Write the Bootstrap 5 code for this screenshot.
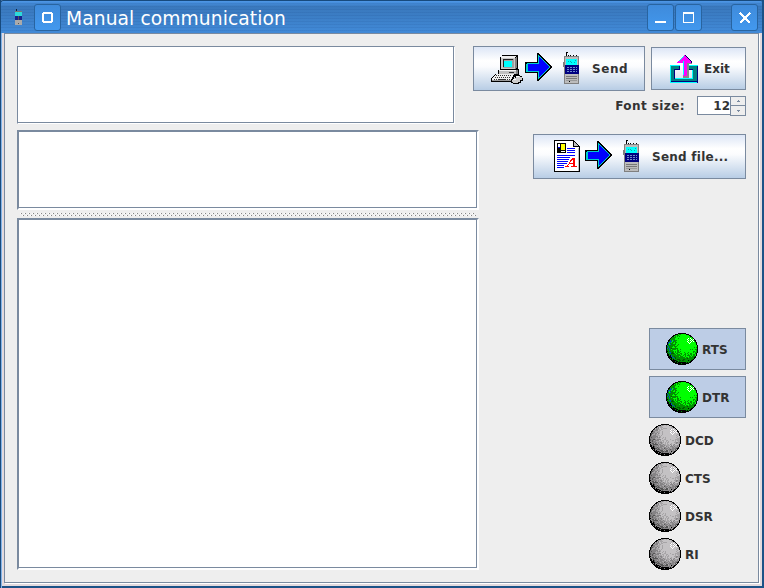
<!DOCTYPE html>
<html lang="en">
<head>
<meta charset="utf-8">
<title>Manual communication</title>
<link rel="stylesheet" href="https://cdn.jsdelivr.net/npm/bootstrap@5.3.0/dist/css/bootstrap.min.css">
<style>
:root{--slate:#7a8a9f;--ink:#333}
body{font:bold 12px/16px "DejaVu Sans",sans-serif;color:var(--ink);background:#eee}
svg{display:block;flex:none;shape-rendering:crispEdges}
.app-window{width:764px;height:588px;background:#e3dade;box-shadow:inset 1px 0 #1c4b7c,inset 2px 0 #80b3e8,inset -2px -2px #1c5287;overflow:hidden}
.titlebar{height:33px;flex:none;padding:1px 6px 0 14px;color:#fff;border-top:1px solid #174a7d;border-left:1px solid #174a7d;border-right:2px solid #1c5287;border-radius:3px 3px 0 0;
 background:repeating-linear-gradient(transparent 0 2px,rgba(0,30,90,.07) 2px 3px),linear-gradient(#4f98e8 0,#458cd9 2px,#3a79bd 6px,#3b7dc4 14px,#4189d6 30px)}
.title-text{font:18.7px/24px "DejaVu Sans",sans-serif;white-space:nowrap;padding:2px 0 0 5px;letter-spacing:.08px}
.tbtn{width:27px;height:27px;padding:0;border:1px solid #2864a0;border-radius:3px;background:linear-gradient(#3f8bdb,#4298ee);display:flex}
.tb-menu{margin-left:11px}
.tb-max{margin-left:1px}
.tb-close{margin-left:29px;margin-right:-2px}
.client{margin:0 5px 5px 4px;border:1px solid var(--slate);background:#eee;padding:12px 12px 0;box-shadow:1px 1px #fff;min-height:0}
.field-box{background:#fff;border:2px solid;border-color:var(--slate) #fff #fff var(--slate);box-shadow:inset -1px -1px var(--slate)}
.prompt-box{width:438px;height:78px;border-width:1px}
.upper{height:84px}
.left-pane{width:462px}
.mid-box{height:80px}
.log-box{height:352px}
.divider{margin:3px 0 1px 3px}
.ocean{font:inherit;color:inherit;padding:0;border:1px solid var(--slate);border-radius:0;background:linear-gradient(#dde6f6 0,#fff 32%,#fbfcfe 45%,#b8cde5 100%);outline:0;display:flex;align-items:center;white-space:nowrap}
.b-send{width:172px;height:45px;padding-left:17px;letter-spacing:.55px}
.b-exit{width:95px;height:43px;margin-top:1px;padding-left:18px}
.b-file{width:213px;height:45px;padding-left:17px;letter-spacing:.25px}
.cmd-row{gap:6px}
.send-label{margin-left:11px}
.exit-label{margin-left:6px}
.file-label{margin-left:8px}
.size-row{letter-spacing:.42px;height:20px;margin-top:5px}
.size-label{margin-right:12px}
.spin{width:49px;height:20px}
.spin-val{width:34px;height:19px;background:#fff;border:1px solid var(--slate);font:bold 12px/18px "DejaVu Sans",sans-serif;letter-spacing:0;text-align:right}
.spin-step{width:16px;height:10px;margin-left:-1px;border:1px solid var(--slate);background:#eee}
.spin-step+.spin-step{border-top:0}
.right-pane{padding-top:4px}
.leds{margin-top:149px;gap:6px}
.toggle span,.led-row span{padding-top:2px}
.led-row span{padding-top:1px}
.toggle{width:97px;height:42px;padding-left:16px;gap:4px;background:#bdcde6;border:1px solid var(--slate)}
.led-row{width:97px;height:32px;gap:4px}
</style>
<script src="https://cdn.jsdelivr.net/npm/bootstrap@5.3.0/dist/js/bootstrap.bundle.min.js"></script>
</head>
<body class="m-0">
<svg width="0" height="0" class="position-absolute">
<defs>
<pattern id="grip" width="4" height="4" patternUnits="userSpaceOnUse"><path fill="#fff" d="M0 0h1v1H0zM2 2h1v1H2z"/><path fill="#858585" d="M1 0h1v1H1zM3 2h1v1H3z"/></pattern>
<symbol id="arrow" viewBox="0 0 28 28">
 <path fill="#000" d="M12 0h2L27.500 14 14 28h-2v-8H0V9h12z"/>
 <path fill="#0cc" d="M13 1.500L25.500 14 13 26.500V19H1v-9h12z"/>
 <path fill="#00f" d="M14 3.500L25 14 14 24.500V18H2.500v-7H14z"/>
 <path fill="#000" d="M1 10h1v1H1z"/>
</symbol>
<symbol id="phone" viewBox="0 0 17 33">
 <path fill="#000" d="M3 1h1v3H3zM7 3h1v1H7zM10 3h1v1h-1zM13 3h1v1h-1zM5 3h1v1H5zM3 0h2v1H3z"/>
 <path fill="#808080" d="M1 4h15v28H1zM0 10h1v5H0z"/><path fill="#bcbcbc" d="M2 5h13v26H2z"/>
 <path fill="#0ff" d="M3 7h11v6H3z"/><path fill="#08a8b0" d="M5 9h1v1H5zM8 10h1v1H8zM12 8h1v1h-1zM11 10h1v1h-1zM7 9h1v1H7z"/>
 <path fill="#000080" d="M2 13h14v9H2z"/><path fill="#6f8ccc" d="M4 15h2v1H4zm3 0h2v1H7zm3 0h2v1h-2zm3 0h1v1h-1zM4 17h2v1H4zm3 0h2v1H7zm3 0h2v1h-2zm3 0h1v1h-1zM4 19h2v1H4zm3 0h2v1H7zm3 0h2v1h-2zm3 0h1v1h-1z"/>
 <path fill="#777" d="M3 24h11v1H3zM3 26h11v1H3z"/><path fill="#999" d="M3 28h11v1H3z"/><path d="M6 29h1v1H6z"/>
</symbol>
<symbol id="computer" viewBox="0 0 32 31">
 <path fill="#000" d="M11 0h16v14h1v6h-3v1h-1l-3 6H0v-3l4-5h3v-4h2V2h2z"/>
 <path fill="#c8c8c8" d="M10 3h14v11H10z"/><path fill="#eee" d="M11 1h14v1h-1v1H10V2h1z"/>
 <path fill="#808080" d="M24 3h1V2h1v11h-1v1h-1z"/><path fill="#a0a0a0" d="M12 4h11v9H12z"/><path fill="#222" d="M12 4h10v1H13v7h-1z"/>
 <path fill="#0ff" d="M13 6h8v6h-8z"/>
 <path fill="#f4f4f4" d="M8 15h17v1H8z"/><path fill="#c0c0c0" d="M8 16h17v3H8z"/><path fill="#808080" d="M25 15h2v4h-2z"/><path fill="#333" d="M18 17h5v1h-5z"/>
 <path fill="#eee" d="M5 19h18l-3 6H1v-1z"/>
 <path fill="#333" d="M5 20h1v1H5zm2 0h1v1H7zm2 0h1v1H9zm2 0h1v1h-1zm2 0h1v1h-1zm2 0h1v1h-1zm2 0h1v1h-1zm2 0h1v1h-1zM4 22h1v1H4zm2 0h1v1H6zm2 0h1v1H8zm2 0h1v1h-1zm2 0h1v1h-1zm2 0h1v1h-1zm2 0h1v1h-1zm2 0h1v1h-1zM3 24h1v1H3zm2 0h1v1H5zm2 0h8v1H7zm9 0h1v1h-1zm2 0h1v1h-1z"/>
 <path fill="#999" d="M1 25h20v1H1z"/><path fill="#000" d="M25 20h4v1h2v2h1v3h-2v2h-2v1h-6v-1h-2v-4h2v-1h2v-2h1z"/>
 <path fill="#ccc" d="M25 21h4v1h2v3h-2v2h-2v1h-5v-1h-1v-2h2v-2h2z"/><path fill="#fff" d="M25 21h3v1h-3zm-3 3h3v1h-3z"/>
</symbol>
<symbol id="document" viewBox="0 0 26 32">
 <path d="M0 0h20v1h1v1h1v1h1v1h1v1h1v1h1v26H0z"/><path fill="#fff" d="M1 1h18v6h6v24H1z"/><path fill="#c0c0c0" d="M20 2h1v1h1v1h1v1h1v1h-4zM24 8h1v23h-1z"/>
 <path d="M3 3h9v10H3z"/><path fill="#fff" d="M4 4h2v8H4z"/><path fill="#00f" d="M4 7h2v1H4z"/><path d="M4 8h2v4H4z"/><path fill="#ff0" d="M7 4h4v6H7z"/><path fill="#fff" d="M7 11h4v1H7z"/>
 <path fill="#00f" d="M13 8h8v1h-8zM13 10h8v1h-8zM13 12h8v1h-8zM3 15h18v1H3zM3 17h13v1H3zM3 19h12v1H3zM3 21h11v1H3zM3 23h10v1H3zM3 25h7v1H3zM3 27h7v1H3z"/>
 <path fill="#f00" d="M18 18h3v8h2v1h-6v-1h2v-2h-4l-1 2h1v1h-4v-1h2z"/><path fill="#fff" d="M16 23l3-4v4z"/>
</symbol>
</defs></svg>

<main class="app-window d-flex flex-column">
 <header class="titlebar d-flex align-items-center">
  <svg width="8" height="17" viewBox="0 0 8 17"><path fill="#123" d="M1 0h1v3H1z"/><path fill="#777" d="M0 2h7v14H0z"/><path fill="#2cdada" d="M0 3h7v4H0z"/><path fill="#18238c" d="M0 7h7v4H0z"/><path fill="#aaa" d="M0 11h7v5H0z"/><path fill="#555" d="M3 7h1v4H3zM3 14h1v1H3z"/></svg>
  <button class="tbtn align-items-center justify-content-center tb-menu" aria-label="Menu"><svg width="11" height="11" viewBox="0 0 11 11"><path fill="#fff" fill-rule="evenodd" d="M1 0h9v1h1v9h-1v1H1v-1H0V1h1zM2 2v7h7V2z"/></svg></button>
  <div class="title-text flex-grow-1">Manual communication</div>
  <button class="tbtn align-items-center justify-content-center" aria-label="Minimize"><svg width="11" height="11"><path fill="#fff" d="M0 9h11v2H0z"/></svg></button>
  <button class="tbtn align-items-center justify-content-center tb-max" aria-label="Maximize"><svg width="11" height="11"><path fill="#fff" fill-rule="evenodd" d="M0 0h11v11H0zM1 2v8h9V2z"/></svg></button>
  <button class="tbtn align-items-center justify-content-center tb-close" aria-label="Close"><svg width="12" height="12"><path fill="none" stroke="#fff" stroke-width="2.300" d="M1 1l10 10M11 1L1 11"/></svg></button>
 </header>
 <section class="client flex-grow-1">
  <div class="upper d-flex justify-content-between">
   <div class="field-box prompt-box"></div>
   <div class="d-flex flex-column align-items-end">
    <div class="d-flex cmd-row">
     <button class="ocean b-send"><svg width="90" height="33"><use href="#computer" y="3" width="32" height="31"/><use href="#arrow" x="34" y="1" width="28" height="28"/><use href="#phone" x="72" width="17" height="33"/></svg><span class="send-label">Send</span></button>
     <button class="ocean b-exit"><svg width="28" height="28" viewBox="0 0 28 28">
      <path fill="#008080" d="M0 10h10v4H5v10h18V14h-5v-4h10v18H0z"/><path fill="#0ff" d="M0 10h10v1H1v17H0zM5 23h18v1H5zM22 14h1v10h-1zM18 10h10v1H18zM18 11h1v3h-1zM0 27h27v1H0z"/><path fill="#000080" d="M9 11h1v3H9zM4 14h6v1H5v9H4zM27 11h1v17h-1zM1 26h26v1H1zM18 14h5v1h-5z"/>
      <path fill="#888" d="M17 7h5v2h-3v14h-6v-2h4z"/><path fill="#000060" d="M15 0h1v1h1v1h1v1h1v1h1v1h1v1h1v2h-5v13h-2z"/><path fill="#f0f" d="M14 0h1v1h1v1h1v1h1v1h1v1h1v1h1v2h-4v13h-4V8H7V7h1V6h1V5h1V4h1V3h1V2h1V1h1z"/><path fill="#0ff" d="M13 1h1v1h-1zM12 2h1v1h-1zM11 3h1v1h-1zM10 4h1v1h-1zM9 5h1v1H9zM13 6h1v14h-1z"/></svg><span class="exit-label">Exit</span></button>
    </div>
    <div class="size-row d-flex align-items-center">
     <label class="size-label">Font size:</label>
     <div class="spin d-flex"><div class="spin-val">12</div><div>
      <div class="spin-step"><svg width="14" height="8"><path fill="#7a8a9f" d="M7 3h1v1h1v1H6V4h1z"/></svg></div>
      <div class="spin-step"><svg width="14" height="9"><path fill="#7a8a9f" d="M6 4h3v1H8v1H7V5H6z"/></svg></div></div></div>
    </div>
   </div>
  </div>
  <div class="d-flex justify-content-between">
   <div class="left-pane"><div class="field-box mid-box"></div><svg class="divider" width="456" height="4"><rect width="456" height="4" fill="url(#grip)"/></svg><div class="field-box log-box"></div></div>
   <div class="d-flex flex-column align-items-end right-pane">
    <button class="ocean b-file"><svg width="93" height="33"><use href="#document" x="3" width="26" height="32"/><use href="#arrow" x="34" y="1" width="28" height="28"/><use href="#phone" x="72" width="17" height="33"/></svg><span class="file-label">Send file...</span></button>
    <div class="leds d-flex flex-column">
     <div class="toggle d-flex align-items-center"><svg data-led="on" width="32" height="32"></svg><span>RTS</span></div>
     <div class="toggle d-flex align-items-center"><svg data-led="on" width="32" height="32"></svg><span>DTR</span></div>
     <div class="led-row d-flex align-items-center"><svg data-led="off" width="32" height="32"></svg><span>DCD</span></div>
     <div class="led-row d-flex align-items-center"><svg data-led="off" width="32" height="32"></svg><span>CTS</span></div>
     <div class="led-row d-flex align-items-center"><svg data-led="off" width="32" height="32"></svg><span>DSR</span></div>
     <div class="led-row d-flex align-items-center"><svg data-led="off" width="32" height="32"></svg><span>RI</span></div>
    </div>
   </div>
  </div>
 </section>
</main>
<script>
// Dithered spheres: light falls from the upper right, shadow gathers lower left.
document.querySelectorAll('[data-led]').forEach(function (svg) {
  var on = svg.dataset.led === 'on', seed = 90210, paths = {};
  function rnd() { seed = (seed * 16807) % 2147483647; return seed / 2147483647; }
  for (var y = 0; y < 32; y++) for (var x = 0; x < 32; x++) {
    var dx = x - 15.5, dy = y - 15.5, r = Math.hypot(dx, dy), n = rnd(), c;
    if (r > 16) continue;
    var d = Math.hypot(x - 20, y - 9) / 24, v = d + (n - .5) * .42;
    if (r > 15.1) c = '#000';
    else if (Math.hypot(x - 24, y - 7.5) < 3.4 && (x + y) % 2 && n > .3) c = '#fff';
    else if (r > 13 && y > 17 && x < 26 && v > .78) c = '#000';
    else if (on) c = x < 10 && r > 12 && y > 6 && n > .55 ? '#0058a8' : v > .86 ? '#005800' : v > .52 ? '#009000' : '#00ff00';
    else c = v > .84 ? '#555' : v > .6 ? '#858385' : v > .38 ? '#a6a4a6' : '#c4c2c4';
    paths[c] = (paths[c] || '') + 'M' + x + ' ' + y + 'h1v1h-1z';
  }
  svg.innerHTML = Object.keys(paths).map(function (c) { return '<path fill="' + c + '" d="' + paths[c] + '"/>'; }).join('');
});
</script>
</body>
</html>
